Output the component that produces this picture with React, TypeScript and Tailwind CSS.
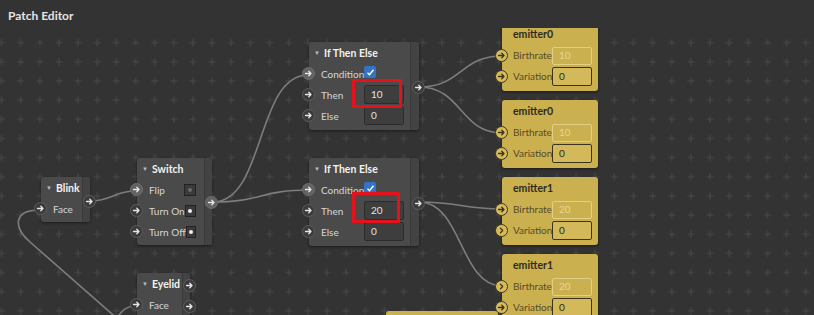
import type { ReactNode } from 'react'

const font = { fontFamily: 'Lato, "Noto Sans", sans-serif' }

function Arrow({ color }: { color: string }) {
  return (
    <svg width="9" height="9" viewBox="0 0 9 9" fill="none" stroke={color} strokeWidth="1.3" strokeLinecap="round" strokeLinejoin="round">
      <path d="M1.5 4.5h5.5M4.8 2.3l2.2 2.2-2.2 2.2" />
    </svg>
  )
}

function Chevron({ color }: { color: string }) {
  return (
    <svg width="9" height="9" viewBox="0 0 9 9" fill="none" stroke={color} strokeWidth="1.3" strokeLinecap="round" strokeLinejoin="round">
      <path d="M3.5 2.3l2.2 2.2-2.2 2.2" />
    </svg>
  )
}

// port circle, placed by the caller with position classes
function Port({ lit, gold, chev, className }: { lit?: boolean; gold?: boolean; chev?: boolean; className: string }) {
  const tone = gold
    ? 'bg-[#d6bb57] border-[#3b3422] border-[1.5px]'
    : lit
      ? 'bg-[#626262] border-[#6e6e6e] border'
      : 'bg-[#3b3b3b] border-[#5d5d5d] border'
  const c = gold ? '#3b3422' : '#e6e6e6'
  return (
    <div className={`absolute w-[13px] h-[13px] rounded-full flex items-center justify-center ${tone} ${className}`}>
      {chev ? <Chevron color={c} /> : <Arrow color={c} />}
    </div>
  )
}

function Header({ title }: { title: string }) {
  return (
    <div className="h-[20px] flex items-center pl-[5px] gap-[4px]">
      <span className="text-[6px] text-[#bdbdbd] leading-none">▼</span>
      <span className="text-[10.5px] font-bold text-[#f2f2f2] leading-none whitespace-nowrap">{title}</span>
    </div>
  )
}

function Row({ label, lit, w = 'w-[43px]', children }: { label: string; lit?: boolean; w?: string; children?: ReactNode }) {
  return (
    <div className="relative h-[21px] flex items-center pl-[12px]">
      <Port lit={lit} className="-left-[7px] top-[4px]" />
      <span className={`text-[10px] text-[#d6d6d6] leading-none whitespace-nowrap ${w}`}>{label}</span>
      {children}
    </div>
  )
}

function NumBox({ value }: { value: string }) {
  return (
    <div className="w-[40px] h-[19px] border border-[#2c2c2c] bg-[#3e3e3e] rounded-[2px] flex items-center pl-[6px] text-[10px] text-[#e2e2e2]">
      {value}
    </div>
  )
}

function Dot({ on }: { on: boolean }) {
  return (
    <div className="ml-auto mr-[8px] w-[12px] h-[12px] border border-[#222] bg-[#3a3a3a] flex items-center justify-center">
      <div className={`w-[4px] h-[4px] rounded-full ${on ? 'bg-[#f0f0f0]' : 'bg-[#6b6b6b]'}`} />
    </div>
  )
}

function Check() {
  return (
    <div className="w-[12px] h-[12px] rounded-[2px] bg-[#3573c4] flex items-center justify-center -mt-[3px]">
      <svg width="9" height="9" viewBox="0 0 9 9" fill="none" stroke="#fff" strokeWidth="1.4">
        <path d="M1.5 4.8l2 2 4-5" />
      </svg>
    </div>
  )
}

function IfThenElse({ pos, then }: { pos: string; then: string }) {
  return (
    <div className={`absolute ${pos} flex rounded-[3px] bg-[#4a4a4a] shadow-[0_1px_3px_rgba(0,0,0,0.5)]`}>
      <div className="w-[101px] pt-[1px] pb-[4px]">
        <Header title="If Then Else" />
        <Row label="Condition" lit>
          <Check />
        </Row>
        <Row label="Then">
          <NumBox value={then} />
        </Row>
        <Row label="Else">
          <NumBox value="0" />
        </Row>
      </div>
      <div className="relative w-[9px] bg-[#434343] border-l border-[#3a3a3a] rounded-r-[3px]">
        <Port className="-right-[6px] top-[39px]" />
      </div>
    </div>
  )
}

function Emitter({ pos, name, rate, chevs }: { pos: string; name: string; rate: string; chevs: [boolean, boolean] }) {
  return (
    <div className={`absolute ${pos} w-[96px] rounded-[3px] bg-[#cbb050] pt-[2px] pb-[4px] shadow-[0_1px_3px_rgba(0,0,0,0.5)]`}>
      <div className="h-[20px] flex items-center pl-[11px] text-[10.5px] font-bold text-[#2e2a1f]">{name}</div>
      <div className="relative h-[21px] flex items-center pl-[11px]">
        <Port gold chev={chevs[0]} className="-left-[7px] top-[4px]" />
        <span className="w-[39px] text-[10px] text-[#564b27] whitespace-nowrap">Birthrate</span>
        <div className="w-[40px] h-[18px] border border-[#e2cf88] rounded-[2px] flex items-center pl-[6px] text-[10px] text-[#e6d697]">{rate}</div>
      </div>
      <div className="relative h-[21px] flex items-center pl-[11px]">
        <Port gold chev={chevs[1]} className="-left-[7px] top-[4px]" />
        <span className="w-[39px] text-[10px] text-[#564b27] whitespace-nowrap">Variation</span>
        <div className="w-[40px] h-[19px] border-[1.5px] border-[#3a3322] bg-[#d3b95a] rounded-[2px] flex items-center pl-[6px] text-[10px] text-[#2e2a1f]">0</div>
      </div>
    </div>
  )
}

function Grid() {
  return (
    <svg className="absolute inset-0" width="814" height="287">
      <defs>
        <pattern id="plus" x="1.5" y="14.7" width="19.15" height="19.15" patternUnits="userSpaceOnUse">
          <path d="M0 -3.5V3.5M-3.5 0H3.5M19.15 -3.5V3.5M15.65 0H22.65M0 15.65V22.65M-3.5 19.15H3.5M19.15 15.65V22.65M15.65 19.15H22.65" stroke="#494949" strokeWidth="1" />
        </pattern>
      </defs>
      <rect width="814" height="287" fill="url(#plus)" />
    </svg>
  )
}

function Wires() {
  return (
    <svg className="absolute inset-0" width="814" height="287" viewBox="0 28 814 287" fill="none" stroke="#7d7d7d" strokeWidth="1.6">
      <path d="M90 201C113 201 113 191 136 191" />
      <path d="M213 202C265 202 256 75 308 75" />
      <path d="M213 202C262 202 260 190 309 190" />
      <path d="M419 87C462 87 460 56 502 56" />
      <path d="M419 87C462 87 460 133 502 133" />
      <path d="M419 202C462 202 460 209 502 209" />
      <path d="M419 202C462 202 460 286 502 286" />
      <path d="M40 210C12 210 14 228 30 242L128 328" />
      <path d="M136 306C126 306 121 311 116 320" />
    </svg>
  )
}

export default function App() {
  return (
    <div className="w-[814px] h-[315px] bg-[#333333] flex flex-col overflow-hidden" style={font}>
      <div className="h-[28px] flex items-center pl-[8px] pt-[3px]">
        <span className="text-[12px] font-bold text-[#e4e4e4]">Patch Editor</span>
      </div>
      <div className="relative flex-1 overflow-hidden">
        <Grid />
        <Wires />

        {/* Blink */}
        <div className="absolute left-[41px] top-[149px] flex rounded-[3px] bg-[#4a4a4a] shadow-[0_1px_3px_rgba(0,0,0,0.5)]">
          <div className="w-[41px] pt-[1px] pb-[3px]">
            <Header title="Blink" />
            <Row label="Face" w="w-[26px]" />
          </div>
          <div className="relative w-[8px] bg-[#434343] border-l border-[#3a3a3a] rounded-r-[3px]">
            <Port className="-right-[6px] top-[18px]" />
          </div>
        </div>

        {/* Switch */}
        <div className="absolute left-[137px] top-[130px] flex rounded-[3px] bg-[#4a4a4a] shadow-[0_1px_3px_rgba(0,0,0,0.5)]">
          <div className="w-[67px] pt-[1px] pb-[3px]">
            <Header title="Switch" />
            <Row label="Flip" w="w-auto" lit><Dot on={false} /></Row>
            <Row label="Turn On" w="w-auto"><Dot on /></Row>
            <Row label="Turn Off" w="w-auto"><Dot on /></Row>
          </div>
          <div className="relative w-[8px] bg-[#434343] border-l border-[#3a3a3a] rounded-r-[3px]">
            <Port lit className="-right-[6px] top-[38px]" />
          </div>
        </div>

        {/* Eyelid */}
        <div className="absolute left-[137px] top-[245px] flex rounded-[3px] bg-[#4a4a4a] shadow-[0_1px_3px_rgba(0,0,0,0.5)]">
          <div className="w-[45px] pt-[1px] pb-[3px]">
            <Header title="Eyelid" />
            <Row label="Face" w="w-[26px]" />
          </div>
          <div className="relative w-[8px] bg-[#434343] border-l border-[#3a3a3a] rounded-r-[3px]">
            <Port className="-right-[6px] top-[6px]" />
            <Port className="-right-[6px] top-[27px]" />
          </div>
        </div>

        <IfThenElse pos="left-[309px] top-[14px]" then="10" />
        <IfThenElse pos="left-[309px] top-[130px]" then="20" />

        <Emitter pos="left-[502px] -top-[5px]" name="emitter0" rate="10" chevs={[false, false]} />
        <Emitter pos="left-[502px] top-[72px]" name="emitter0" rate="10" chevs={[false, false]} />
        <Emitter pos="left-[502px] top-[149px]" name="emitter1" rate="20" chevs={[false, true]} />
        <Emitter pos="left-[502px] top-[226px]" name="emitter1" rate="20" chevs={[true, false]} />

        <div className="absolute left-[386px] top-[283px] w-[112px] h-[40px] rounded-[3px] bg-[#cbb050]" />

        {/* highlight boxes */}
        <div className="absolute left-[352px] top-[51px] w-[50px] h-[29px] border-[3px] border-[#e3121b]" />
        <div className="absolute left-[352px] top-[164px] w-[48px] h-[31px] border-[3px] border-[#e3121b]" />
      </div>
    </div>
  )
}
